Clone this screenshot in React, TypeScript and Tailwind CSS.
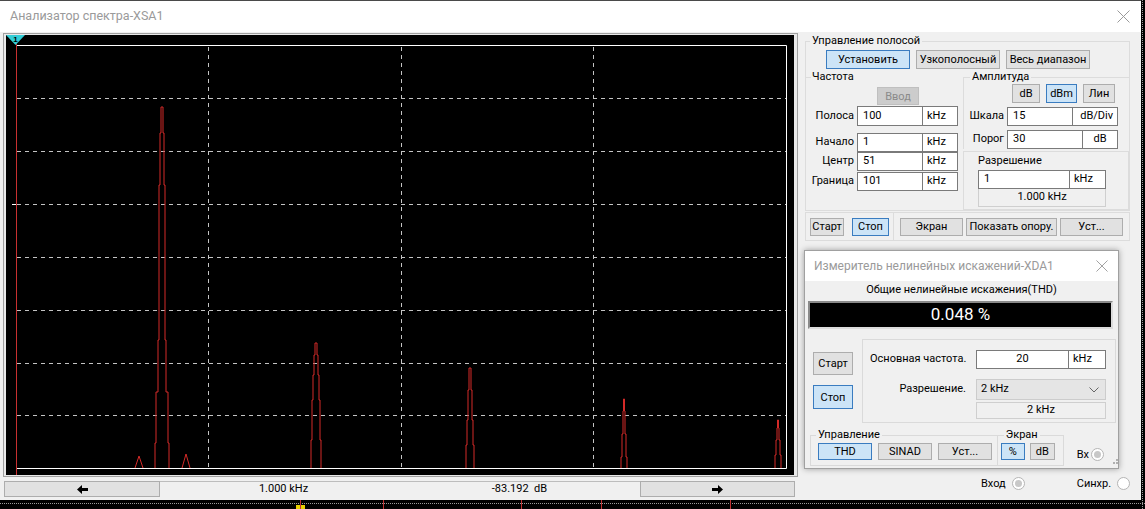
import React from "react";

type BtnProps = { children: React.ReactNode; className?: string; active?: boolean; disabled?: boolean };

function Btn({ children, className = "", active, disabled }: BtnProps) {
  const look = active
    ? "bg-[#cce4f7] border-[#3a7cc0]"
    : disabled
    ? "bg-[#cccccc] border-[#bfbfbf] text-[#8a8a8a]"
    : "bg-[#e1e1e1] border-[#adadad]";
  return <div className={`flex items-center justify-center border text-[11px] leading-none whitespace-nowrap shrink-0 ${look} ${className}`}>{children}</div>;
}

function Field({ value, unit, inputW, unitW, center }: { value: string; unit: string; inputW: string; unitW: string; center?: boolean }) {
  return (
    <div className="flex h-full">
      <div className={`h-full bg-white border border-[#7a7a7a] flex items-center px-[5px] ${center ? "justify-center" : ""} ${inputW}`}>{value}</div>
      <div className={`h-full bg-white border border-l-0 border-[#7a7a7a] flex items-center px-[4px] ${unitW}`}>{unit}</div>
    </div>
  );
}

function Radio({ on }: { on?: boolean }) {
  return (
    <div className="w-[13px] h-[13px] rounded-full border border-[#b5b5b5] bg-white flex items-center justify-center">
      {on && <div className="w-[7px] h-[7px] rounded-full bg-[#c8c8c8]" />}
    </div>
  );
}

function CloseX({ size = 13 }: { size?: number }) {
  return (
    <svg width={size} height={size} viewBox="0 0 13 13">
      <path d="M0.5 0.5 L12.5 12.5 M12.5 0.5 L0.5 12.5" stroke="#9a9a9a" strokeWidth="1" />
    </svg>
  );
}

// spire of a spectral line, stepping inward on the way up
function spire(cx: number, levels: [number, number][], base = 468) {
  let d = `M${cx - levels[0][0]},${base}`;
  levels.forEach(([dx, y], i) => {
    if (i > 0) d += ` H${cx - dx}`;
    d += ` V${y}`;
  });
  const rev = [...levels].reverse();
  rev.forEach(([dx, y], i) => {
    d += ` H${cx + dx}`;
    const next = rev[i + 1];
    d += ` V${next ? next[1] : base}`;
  });
  return d;
}

const spikes: string[] = [
  spire(162, [[7, 443], [6, 392], [4, 340], [3, 185], [2, 133], [1, 107]]),
  spire(316, [[5, 440], [4, 400], [3, 375], [2, 355], [1, 343]]),
  spire(470, [[4, 445], [3, 420], [2, 390], [1, 368]]),
  spire(624, [[3, 457], [2, 434], [1, 411], [0.5, 399]]),
  spire(778, [[3, 455], [2, 440], [1, 428], [0.5, 420]]),
  "M135,468 L139,456 L143,468",
  "M182,468 L186,454 L190,468",
];

function Spectrum() {
  const rows = [98.5, 151.5, 204.5, 257.5, 310.5, 363.5, 415.5];
  const cols = [208.5, 401.5, 593.5];
  return (
    <svg width="788" height="440" viewBox="6 35 788 440" className="block">
      <rect x="6" y="35" width="788" height="440" fill="#000" />
      {rows.map((y) => (
        <line key={y} x1="17" x2="786" y1={y} y2={y} stroke="#c4c4c4" strokeDasharray="4 4" />
      ))}
      {cols.map((x) => (
        <line key={x} x1={x} x2={x} y1="47" y2="468" stroke="#c4c4c4" strokeDasharray="4 4" />
      ))}
      <path d="M16,45.5 H786.5 V468.5 H16" fill="none" stroke="#fff" />
      <line x1="12" x2="17" y1="204.5" y2="204.5" stroke="#fff" />
      <line x1="16.5" x2="16.5" y1="40" y2="475" stroke="#c83030" />
      {spikes.map((d, i) => (
        <path key={i} d={d} fill="none" stroke="#d42a28" strokeWidth="1" />
      ))}
      <polygon points="6,35 25,35 15.5,45" fill="#33cdd6" />
      <text x="15.5" y="41.5" fontSize="8" fontWeight="bold" textAnchor="middle" fill="#000" fontFamily="Liberation Sans, sans-serif">1</text>
    </svg>
  );
}

function Arrow({ left }: { left?: boolean }) {
  return (
    <svg width="11" height="9" viewBox="0 0 11 9">
      <path d={left ? "M0,4.5 L5,0 L5,3 L11,3 L11,6 L5,6 L5,9 Z" : "M11,4.5 L6,0 L6,3 L0,3 L0,6 L6,6 L6,9 Z"} fill="#000" />
    </svg>
  );
}

function ThdDialog() {
  return (
    <div className="absolute left-[804px] top-[250px] w-[315px] h-[219px] bg-[#f0f0f0] border border-[#a0a0a0] shadow-[0_0_6px_rgba(0,0,0,0.35)] flex flex-col text-[11px]">
      <div className="h-[30px] bg-white flex items-center justify-between pl-[9px] pr-[10px]">
        <span className="text-[12px] text-[#9a9a9a]">Измеритель нелинейных искажений-XDA1</span>
        <CloseX size={12} />
      </div>
      <div className="text-center leading-[16px] mt-[1px]">Общие нелинейные искажения(THD)</div>
      <div className="ml-[3px] mt-[3px] w-[305px] h-[28px] bg-black border-2 border-t-[#8a8a8a] border-l-[#8a8a8a] border-b-[#dcdcdc] border-r-[#dcdcdc] flex items-center justify-center text-white text-[17px]">0.048 %</div>
      <div className="flex mt-[10px] h-[84px]">
        <div className="pl-[8px] pt-[13px] flex flex-col gap-[10px]">
          <Btn className="w-[40px] h-[23px]">Старт</Btn>
          <Btn active className="w-[40px] h-[24px]">Стоп</Btn>
        </div>
        <div className="ml-[9px] w-[254px] h-full border border-[#dadada] pl-[7px] pt-[10px]">
          <div className="flex items-center h-[19px]">
            <span className="w-[106px]">Основная частота.</span>
            <Field value="20" unit="kHz" inputW="w-[93px]" unitW="w-[37px]" center />
          </div>
          <div className="flex mt-[10px]">
            <span className="w-[96px] text-right h-[21px] flex items-center justify-end">Разрешение.</span>
            <div className="ml-[10px] flex flex-col gap-[2px]">
              <div className="w-[130px] h-[21px] bg-[#e5e5e5] border border-[#cccccc] flex items-center justify-between pl-[4px] pr-[6px]">
                <span>2 kHz</span>
                <svg width="10" height="6" viewBox="0 0 10 6"><path d="M0.5,0.5 L5,5 L9.5,0.5" fill="none" stroke="#666" /></svg>
              </div>
              <div className="w-[130px] h-[17px] bg-[#f0f0f0] border border-[#cfcfcf] flex items-center justify-center">2 kHz</div>
            </div>
          </div>
        </div>
      </div>
      <div className="flex items-end mt-[4px] ml-[5px]">
        <fieldset className="w-[188px] h-[39px] border border-[#dadada] pl-[7px]">
          <legend className="-ml-[2px] px-[2px] leading-[16px]">Управление</legend>
          <div className="flex gap-[6px]">
            <Btn active className="w-[54px] h-[17px]">THD</Btn>
            <Btn className="w-[54px] h-[17px]">SINAD</Btn>
            <Btn className="w-[54px] h-[17px]">Уст...</Btn>
          </div>
        </fieldset>
        <fieldset className="w-[66px] h-[39px] border border-l-0 border-[#dadada] pl-[3px]">
          <legend className="ml-[3px] px-[2px] leading-[16px]">Экран</legend>
          <div className="flex gap-[5px]">
            <Btn active className="w-[24px] h-[17px]">%</Btn>
            <Btn className="w-[25px] h-[17px]">dB</Btn>
          </div>
        </fieldset>
        <div className="flex items-center ml-[13px] mb-[3px] gap-[2px]">
          <span>Bx</span>
          <Radio on />
        </div>
        <div className="ml-[6px] mb-[2px] grid grid-cols-3 gap-[1px]">
          <span />
          <span />
          <span className="w-[2px] h-[2px] bg-[#b0b0b0]" />
          <span />
          <span className="w-[2px] h-[2px] bg-[#b0b0b0]" />
          <span className="w-[2px] h-[2px] bg-[#b0b0b0]" />
        </div>
      </div>
    </div>
  );
}

export default function App() {
  return (
    <div className="relative w-[1145px] h-[509px] bg-black overflow-hidden font-['Roboto','Liberation_Sans',sans-serif] text-[#000]">
      {/* background window edges */}
      <div className="absolute left-0 top-[503px] w-[1145px] border-t border-dotted border-[#9a9a9a]" />
      <div className="absolute left-[1142px] top-0 h-[509px] border-l border-dotted border-[#9a9a9a]" />
      <div className="absolute left-[296px] top-[505px] w-[9px] h-[4px] bg-[#e8d000]" />
      <div className="absolute left-[300px] top-[500px] w-px h-[9px] bg-[#c03030]" />
      <div className="absolute left-[383px] top-[500px] w-px h-[9px] bg-[#c03030]" />
      <div className="absolute left-[521px] top-[500px] w-px h-[9px] bg-[#c03030]" />
      <div className="absolute left-[601px] top-[500px] w-px h-[9px] bg-[#c03030]" />
      <div className="absolute left-[730px] top-[500px] w-px h-[9px] bg-[#c03030]" />

      <div className="w-[1141px] h-[500px] bg-[#f0f0f0] border-t border-[#4a4a4a] flex flex-col">
        <div className="h-[31px] bg-white flex items-center justify-between pl-[10px] pr-[11px] shrink-0">
          <span className="text-[12.5px] text-[#9a9a9a]">Анализатор спектра-XSA1</span>
          <CloseX />
        </div>

        <div className="flex flex-1">
          {/* screen */}
          <div className="w-[800px] pl-[3px] pt-[1px] flex flex-col">
            <div className="w-[795px] border border-[#a0a0a0] px-[2px] py-[1px] bg-[#e9e9e9]">
              <Spectrum />
            </div>
            <div className="flex mt-[4px] ml-[1px] h-[16px] text-[11px]">
              <Btn className="w-[156px] h-full"><Arrow left /></Btn>
              <div className="w-[239px] h-full border-t border-[#bdbdbd] flex items-center justify-center pl-[8px]">1.000 kHz</div>
              <div className="w-[241px] h-full border-t border-[#bdbdbd] flex items-center justify-center whitespace-pre">-83.192  dB</div>
              <Btn className="w-[155px] h-full"><Arrow /></Btn>
            </div>
          </div>

          {/* controls */}
          <div className="w-[341px] pl-[5px] pr-[11px] pt-[1px] flex flex-col text-[11px]">
            <fieldset className="h-[178px] border border-[#dcdcdc]">
              <legend className="ml-[4px] px-[2px] leading-[16px]">Управление полосой</legend>
              <div className="flex gap-[6px] pl-[20px] mt-[1px]">
                <Btn active className="w-[84px] h-[19px]">Установить</Btn>
                <Btn className="w-[84px] h-[19px]">Узкополосный</Btn>
                <Btn className="w-[84px] h-[19px]">Весь диапазон</Btn>
              </div>
              <div className="flex">
                <div className="w-[157px] flex flex-col">
                  <div className="flex items-center h-[16px]">
                    <span className="w-[5px] border-t border-[#dcdcdc]" />
                    <span className="px-[1px]">Частота</span>
                  </div>
                  <Btn disabled className="w-[42px] h-[18px] ml-[71px] mt-[2px]">Ввод</Btn>
                  <div className="flex h-[20px] mt-[1px] items-center">
                    <span className="w-[51px] text-right pr-[3px]">Полоса</span>
                    <Field value="100" unit="kHz" inputW="w-[66px]" unitW="w-[35px]" />
                  </div>
                  <div className="flex h-[19px] mt-[7px] items-center">
                    <span className="w-[51px] text-right pr-[3px]">Начало</span>
                    <Field value="1" unit="kHz" inputW="w-[66px]" unitW="w-[35px]" />
                  </div>
                  <div className="flex h-[19px] items-center">
                    <span className="w-[51px] text-right pr-[3px]">Центр</span>
                    <Field value="51" unit="kHz" inputW="w-[66px]" unitW="w-[35px]" />
                  </div>
                  <div className="flex h-[19px] mt-[1px] items-center">
                    <span className="w-[51px] text-right pr-[3px]">Граница</span>
                    <Field value="101" unit="kHz" inputW="w-[66px]" unitW="w-[35px]" />
                  </div>
                </div>
                <div className="w-[166px] flex flex-col">
                  <fieldset className="h-[80px] border-l border-t border-[#dcdcdc]">
                    <legend className="ml-[6px] px-[2px] leading-[16px]">Амплитуда</legend>
                    <div className="flex gap-[6px] ml-[48px] -mt-[1px]">
                      <Btn className="w-[28px] h-[19px]">dB</Btn>
                      <Btn active className="w-[31px] h-[19px]">dBm</Btn>
                      <Btn className="w-[32px] h-[19px]">Лин</Btn>
                    </div>
                    <div className="flex h-[19px] mt-[4px] items-center">
                      <span className="w-[43px] text-right pr-[3px]">Шкала</span>
                      <Field value="15" unit="dB/Div" inputW="w-[66px]" unitW="w-[45px] justify-end" />
                    </div>
                    <div className="flex h-[19px] mt-[4px] items-center">
                      <span className="w-[43px] text-right pr-[3px]">Порог</span>
                      <Field value="30" unit="dB" inputW="w-[76px]" unitW="w-[35px] justify-center" />
                    </div>
                  </fieldset>
                  <div className="h-[59px] mt-[2px] border border-[#dcdcdc] pl-[14px]">
                    <div className="leading-[16px] mt-[1px]">Разрешение</div>
                    <div className="h-[19px] mt-[1px]">
                      <Field value="1" unit="kHz" inputW="w-[92px]" unitW="w-[36px]" />
                    </div>
                    <div className="w-[128px] h-[18px] border border-t-0 border-[#cfcfcf] flex items-center justify-center">1.000 kHz</div>
                  </div>
                </div>
              </div>
            </fieldset>

            <div className="h-[29px] mt-[1px] border border-[#dcdcdc] flex items-center">
              <div className="w-[88px] h-full flex items-center pl-[4px] gap-[8px] border-r border-[#dcdcdc]">
                <Btn className="w-[34px] h-[18px]">Старт</Btn>
                <Btn active className="w-[37px] h-[18px]">Стоп</Btn>
              </div>
              <Btn className="w-[63px] h-[18px] ml-[6px]">Экран</Btn>
              <Btn className="w-[91px] h-[18px] ml-[3px]">Показать опору.</Btn>
              <Btn className="w-[63px] h-[18px] ml-[3px]">Уст...</Btn>
            </div>

            <div className="mt-auto mb-[8px] flex items-center">
              <span className="ml-[176px]">Вход</span>
              <div className="ml-[6px]"><Radio on /></div>
              <span className="ml-[52px]">Синхр.</span>
              <div className="ml-[6px]"><Radio /></div>
            </div>
          </div>
        </div>
      </div>

      <ThdDialog />
    </div>
  );
}
